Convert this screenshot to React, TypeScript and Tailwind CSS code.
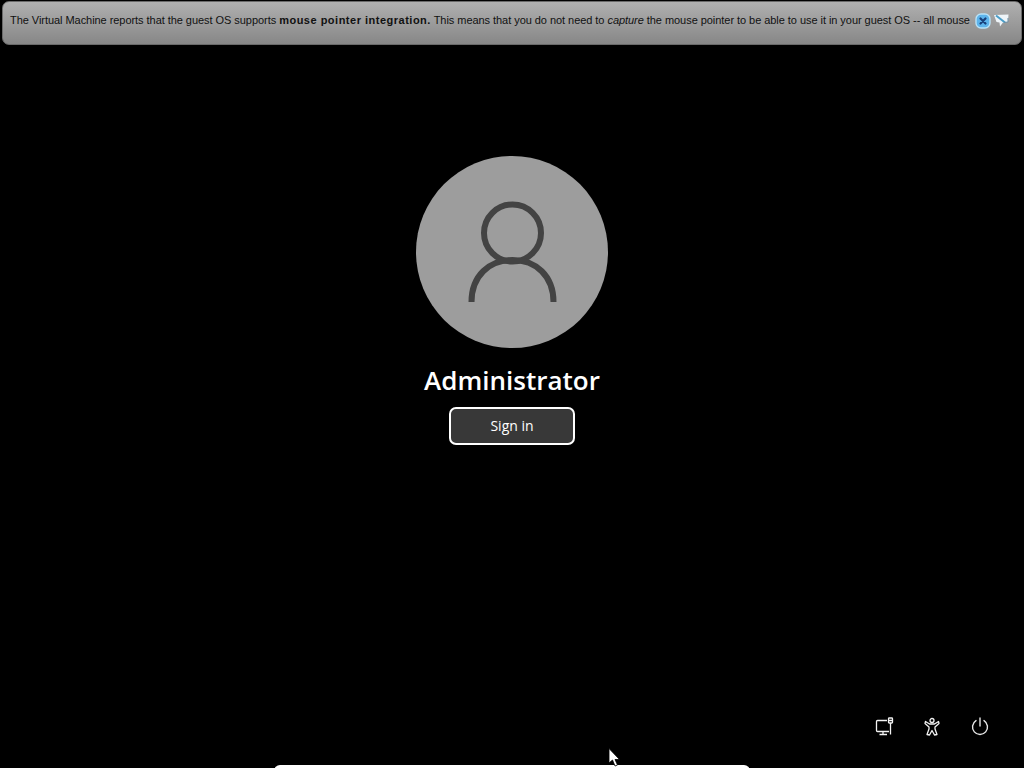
export default function App() {
  return (
    <div className="relative h-[768px] w-[1024px] overflow-hidden bg-black flex flex-col items-center">
      <div className="mt-px h-[44px] w-[1020px] shrink-0 rounded-[7px] border border-[#6a6a6a] bg-gradient-to-b from-[#b0b0b0] to-[#878787] flex items-center pl-[7px] pb-[5px] text-[#111] whitespace-nowrap overflow-hidden" style={{ fontFamily: '"Liberation Sans", sans-serif' }}>
        <span className="text-[11px] tracking-[-0.05px] w-[965px] shrink-0">
          The Virtual Machine reports that the guest OS supports <b className="tracking-[0.5px]">mouse pointer integration.</b> This means that you do not need to <i>capture</i> the mouse pointer to be able to use it in your guest OS -- all mouse
        </span>
        <svg width="16" height="16" viewBox="0 0 16 16" className="shrink-0">
          <rect x="1" y="1" width="14" height="14" rx="5" fill="#5db4ec" stroke="#b8e2f8" strokeWidth="1.4" />
          <path d="M5.5 5.5 10.5 10.5M10.5 5.5 5.5 10.5" stroke="#173f7a" strokeWidth="2.2" strokeLinecap="round" />
        </svg>
        <svg width="17" height="15" viewBox="0 0 17 15" className="ml-[2px] shrink-0">
          <path d="M1 2 15.5 1.5 15 9 10 9.5 7 13.5 6.5 9.5 3.5 9Z" fill="#eef4f8" />
          <path d="M3 2.5 12 9.5" stroke="#4a9ec9" strokeWidth="2" />
          <path d="M15 5 15 9 11 9.5" stroke="#6e8ea3" strokeWidth="1" fill="none" />
        </svg>
      </div>

      <div className="mt-[111px] size-[192px] shrink-0 rounded-full bg-[#9d9d9d] flex items-center justify-center">
        <svg width="140" height="140" viewBox="0 0 140 140" fill="none" stroke="#434343" strokeWidth="6" className="-translate-y-[2px] -translate-x-[1px]">
          <circle cx="71.5" cy="53" r="28.5" />
          <path d="M30.5 122C30.5 96 48 80 71.5 80C95 80 112.5 96 112.5 122" />
        </svg>
      </div>

      <div className="mt-[13px] h-[38px] leading-[38px] text-[26px] font-semibold text-white" style={{ fontFamily: '"Open Sans", sans-serif' }}>
        Administrator
      </div>

      <button className="mt-[8px] h-[38px] w-[126px] rounded-[7px] border-2 border-white bg-[#383838] pb-[1px] text-[14px] text-white" style={{ fontFamily: '"Open Sans", sans-serif' }}>
        Sign in
      </button>

      <div className="mt-auto mb-[31px] w-full flex justify-end gap-[28px] pr-[34px] text-white">
        <svg width="20" height="20" viewBox="0 0 20 20" fill="none" stroke="#f2f2f2" strokeWidth="1.3" className="translate-x-[1px]">
          <path d="M12 3.5H2.5A1 1 0 0 0 1.5 4.5V13.5A1 1 0 0 0 2.5 14.5H14" />
          <path d="M8 14.5V17.5M4.5 17.5H12" />
          <rect x="13.5" y="1" width="4" height="5" rx="0.8" />
          <path d="M13.5 3.5H17.5M15.5 6V17.5" />
        </svg>
        <svg width="20" height="20" viewBox="0 0 20 20" fill="none" stroke="#f2f2f2" strokeWidth="1.3" strokeLinejoin="round">
          <circle cx="10" cy="3.5" r="2" />
          <path d="M3.5 4.5 7.5 7H12.5L16.5 4.5 17 6.5 13 10V12L15 17.5 12.5 18 10 13.5 7.5 18 5 17.5 7 12V10L3 6.5Z" />
        </svg>
        <svg width="20" height="20" viewBox="0 0 20 20" fill="none" stroke="#e6e6e6" strokeWidth="1.4" strokeLinecap="round">
          <path d="M6 3.6A7.5 7.5 0 1 0 14 3.6" />
          <path d="M10 1V9" />
        </svg>
      </div>

      <div className="absolute -bottom-[4px] left-[274px] h-[7px] w-[476px] rounded-t-[6px] bg-white" />
      <svg width="14" height="20" viewBox="0 0 14 20" className="absolute left-[608px] top-[748px]">
        <path d="M1 0.5V15L4.5 12 7 18 9.5 17 7 11.5H11.5Z" fill="#fff" stroke="#000" strokeWidth="0.8" />
      </svg>
    </div>
  );
}
